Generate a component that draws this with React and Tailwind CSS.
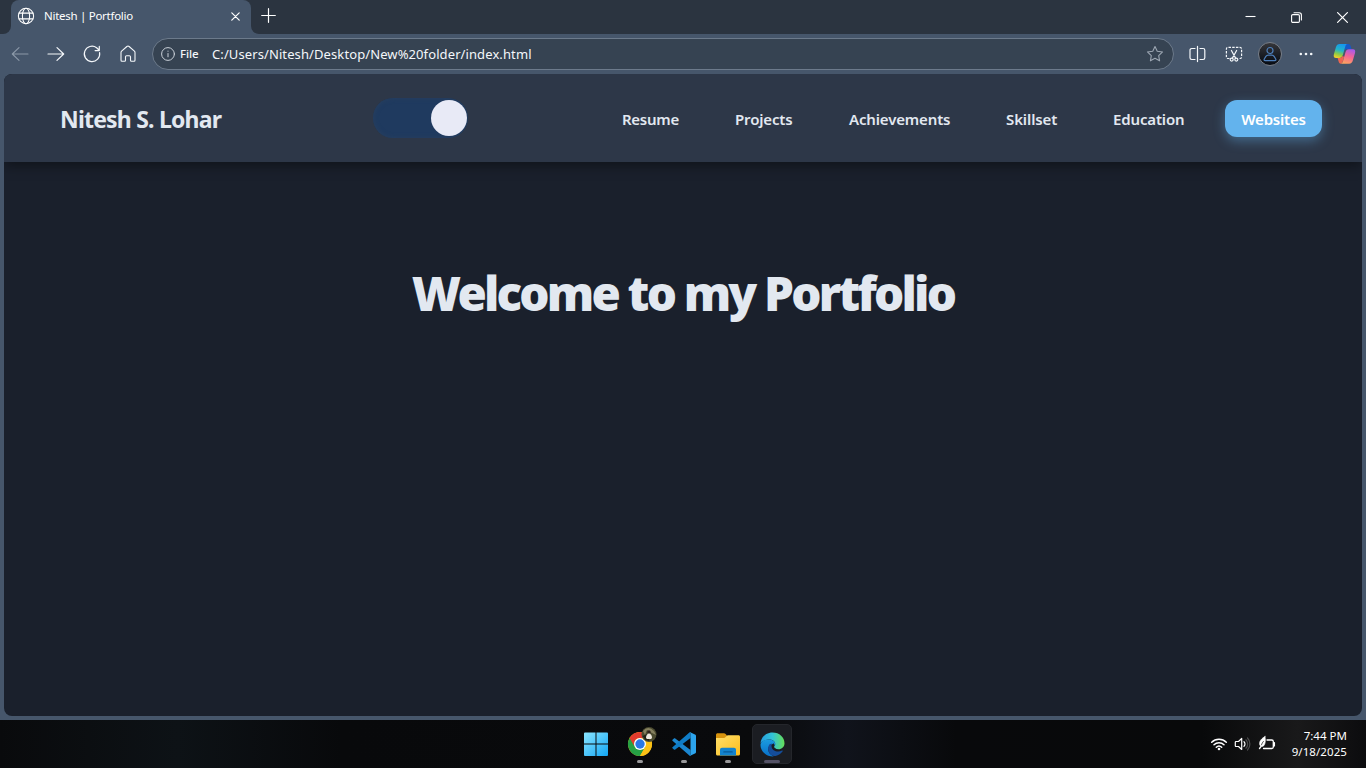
import React from "react";

const stroke = { fill: "none", stroke: "currentColor", strokeLinecap: "round", strokeLinejoin: "round" };

function Icon({ size = 20, className = "", sw = 1.1, children, box = "0 0 20 20" }) {
  return (
    <svg width={size} height={size} viewBox={box} {...stroke} strokeWidth={sw} className={`shrink-0 ${className}`}>
      {children}
    </svg>
  );
}

function TabStrip() {
  return (
    <div className="flex h-[34px] shrink-0 items-start bg-[#2b3440]">
      <div className="flex w-[11px] h-[34px] bg-[#46566b]">
        <div className="w-full rounded-br-[8px] bg-[#2b3440]" />
      </div>
      <div className="flex h-[34px] w-[240px] items-center rounded-t-[8px] bg-[#46566b] pb-[2px] text-white">
        <Icon size={18} className="ml-[6px]" sw={1.15}>
          <circle cx="10" cy="10" r="8.5" />
          <ellipse cx="10" cy="10" rx="4" ry="8.5" />
          <path d="M2.3 6.8h15.4M2.3 13.2h15.4" />
        </Icon>
        <span className="ml-[9px] w-[170px] whitespace-nowrap text-[11.5px] tracking-[-0.28px]">Nitesh | Portfolio</span>
        <Icon size={9} className="ml-[17px]" box="0 0 9 9" sw={1.2}>
          <path d="M.8.8l7.4 7.4M8.2.8L.8 8.2" />
        </Icon>
      </div>
      <div className="flex h-[34px] w-[10px] bg-[#46566b]">
        <div className="w-full rounded-bl-[8px] bg-[#2b3440]" />
      </div>
      <Icon size={15} className="mt-[8px] text-white" box="0 0 15 15" sw={1.2}>
        <path d="M7.5.7v13.6M.7 7.5h13.6" />
      </Icon>
      <div className="ml-auto flex h-[34px] items-center gap-[35px] pr-[18px] text-white">
        <Icon size={11} box="0 0 11 11" sw={1.1}><path d="M.5 4.5h10" strokeLinecap="butt" /></Icon>
        <Icon size={11} box="0 0 11 11" sw={1.1}>
          <rect x=".6" y="2.6" width="7.8" height="7.8" rx="1.2" />
          <path d="M3 .7h5.2a2.2 2.2 0 0 1 2.2 2.2V8" />
        </Icon>
        <Icon size={11} box="0 0 11 11" sw={1.2}><path d="M.6.6l9.8 9.8M10.4.6L.6 10.4" /></Icon>
      </div>
    </div>
  );
}

function CopilotLogo() {
  return (
    <svg width="23" height="22" viewBox="0 0 23 22" className="shrink-0">
      <defs>
        <linearGradient id="cpA" x1=".6" y1="0" x2=".3" y2="1">
          <stop offset="0" stopColor="#1596ee" /><stop offset=".45" stopColor="#23b5c9" />
          <stop offset=".75" stopColor="#8fcb45" /><stop offset="1" stopColor="#f1cf28" />
        </linearGradient>
        <linearGradient id="cpB" x1=".6" y1="0" x2=".3" y2="1">
          <stop offset="0" stopColor="#a95ae8" /><stop offset=".45" stopColor="#f36397" />
          <stop offset="1" stopColor="#ffa45c" />
        </linearGradient>
      </defs>
      <path d="M12 1h3.3c1.3 0 1.9.8 2.3 2l.9 3h-4.2c-1.5 0-2.2.8-2.6 2.1z" fill="#1658c8" />
      <path d="M6.7 1h7.7c-1.2.3-1.7 1.2-2.1 2.5l-2.4 8.3c-.6 2-1.6 3.1-3.6 3.1H3.1c-2.1 0-2.8-1.5-2.2-3.7L3 3.9C3.6 2 4.7 1 6.7 1z" fill="url(#cpA)" />
      <path d="M11 14l-1.2 4.2c-.4 1.4-1 2.2-2.2 2.6-1-.2-1.6-1-1.9-2l-1.1-3.9h2.1c1.5 0 2.5-.9 3.1-2.1z" fill="#ed6650" />
      <path d="M15.9 6.2h4c2.1 0 2.7 1.5 2.1 3.7l-2.1 7.3c-.6 2-1.7 3.6-3.8 3.6H7.9c1.2-.4 1.7-1.4 2.1-2.7l2.5-8.8c.6-2 1.5-3.1 3.4-3.1z" fill="url(#cpB)" />
    </svg>
  );
}

function Toolbar() {
  return (
    <div className="flex h-10 shrink-0 items-center bg-[#46566b] pl-[10px] text-[#f4f7fa]">
      <Icon className="text-[#8b98a8]"><path d="M18 10H2.3M9 3.6L2.3 10 9 16.4" /></Icon>
      <Icon className="ml-4" sw={1.2}><path d="M2 10h15.7M11 3.6l6.7 6.4-6.7 6.4" /></Icon>
      <Icon className="ml-4" sw={1.2}>
        <path d="M17.6 8.6a7.7 7.7 0 1 1-3-4.9L17 6M17.3 2.4v4.2h-4.2" />
      </Icon>
      <Icon className="ml-4" sw={1.1}>
        <path d="M3 8.6c0-.6.2-1 .6-1.4l5.3-4.7c.7-.6 1.5-.6 2.2 0l5.3 4.7c.4.4.6.8.6 1.4v7.7c0 .7-.4 1-1 1h-2.5c-.7 0-1-.4-1-1v-3.500c0-.7-.4-1.100-1.100-1.100H8.600c-.7 0-1.100.4-1.100 1.100v3.500c0 .6-.3 1-1 1H4c-.6 0-1-.3-1-1z" />
      </Icon>
      <div className="ml-[14px] flex h-8 w-[1022px] items-center rounded-full border border-[#6c7a8b] bg-[#364352] pl-2">
        <Icon size={14} box="0 0 14 14" sw={1} className="text-[#cad1d9]">
          <circle cx="7" cy="7" r="6.4" /><path d="M7 6.500v3.300M7 4.100v.2" />
        </Icon>
        <span className="ml-[5px] w-[19px] whitespace-nowrap text-[11.5px] font-medium tracking-[-0.1px]">File</span>
        <span className="ml-[13px] whitespace-nowrap pt-px text-[13px] tracking-[0.1px]">C:/Users/Nitesh/Desktop/New%20folder/index.html</span>
        <Icon size={18} className="ml-auto mr-[9px] text-[#9da7b3]" sw={1.2}>
          <path d="M10 1.6l2.5 5.3 5.9.8-4.3 4.1 1 5.8L10 14.8l-5.1 2.8 1-5.8L1.6 7.7l5.9-.8z" />
        </Icon>
      </div>
      <Icon size={18} className="ml-[14px]" box="0 0 18 18" sw={1.2}>
        <path d="M9.5 1.400v15.200M7 3.500H3.700c-1 0-1.700.7-1.700 1.700v7.600c0 1 .7 1.700 1.700 1.700H7M12 3.500h3.100c1 0 1.700.7 1.700 1.700v7.600c0 1-.7 1.700-1.700 1.700H12" />
      </Icon>
      <Icon size={18} className="ml-[19px]" box="0 0 18 18" sw={1.2}>
        <path d="M4.500 13.500H3c-.9 0-1.600-.7-1.600-1.600V4c0-.9.7-1.600 1.600-1.600h12c.9 0 1.600.7 1.600 1.600v7.900c0 .9-.7 1.600-1.600 1.600h-1.500" strokeDasharray="2.500 1.200" strokeLinecap="butt" />
        <path d="M6.400 5.500l4.200 7.600M11.600 5.500l-4.200 7.600" />
        <circle cx="6.700" cy="14.600" r="1.500" /><circle cx="11.300" cy="14.600" r="1.500" />
      </Icon>
      <div className="ml-[15px] flex h-6 w-6 items-center justify-center rounded-full border border-[#777d86] bg-linear-to-b from-[#35363b] to-[#070b13]">
        <Icon size={16} box="0 0 16 16" sw={1.2} className="text-[#4d7eb9]">
          <circle cx="8" cy="4.500" r="3" />
          <path d="M6.300 9.100h3.400c1.200 0 2 .5 2.600 1.500l1.400 2.400c.5.900.1 1.600-.9 1.600H3.200c-1 0-1.400-.7-.9-1.600l1.400-2.400c.6-1 1.400-1.500 2.600-1.500z" />
        </Icon>
      </div>
      <svg width="14" height="4" viewBox="0 0 14 4" className="ml-[17px] shrink-0 fill-current">
        <circle cx="1.8" cy="2" r="1.3" /><circle cx="7" cy="2" r="1.3" /><circle cx="12.2" cy="2" r="1.3" />
      </svg>
      <div className="ml-5"><CopilotLogo /></div>
    </div>
  );
}

const links = [
  { label: "Resume", style: "w-[57px] mr-14 tracking-[-0.28px]" },
  { label: "Projects", style: "w-[58px] mr-14 tracking-[-0.15px]" },
  { label: "Achievements", style: "w-[102px] mr-[55px] tracking-[-0.15px]" },
  { label: "Skillset", style: "w-[52px] mr-[55px] tracking-[-0.1px]" },
  { label: "Education", style: "w-[72px] mr-10 tracking-[-0.15px]" },
];

function SiteHeader() {
  return (
    <header className="flex h-[88px] shrink-0 items-center bg-[#2d3748] pl-[56px] shadow-[0_4px_12px_rgba(0,0,0,0.4)]">
      <div className="w-[313px] whitespace-nowrap pt-[2px] text-[23px] font-bold tracking-[-0.8px] text-[#e2e8f0]">Nitesh S. Lohar</div>
      <div className="flex h-10 w-[95px] items-center justify-end rounded-full bg-[#1f3a5f] pr-px shadow-[inset_0_0_5px_#29405f]">
        <div className="h-9 w-9 rounded-full bg-[#e8eaf6]" />
      </div>
      <nav className="ml-[154px] flex items-center text-[15px] font-semibold text-[#e2e8f0]">
        {links.map((l) => (
          <a key={l.label} className={`whitespace-nowrap pt-[2px] ${l.style}`}>{l.label}</a>
        ))}
        <a className="flex h-[37px] w-[97px] items-center justify-center rounded-[12px] bg-[#63b3ed] pt-[3px] tracking-[-0.2px] text-white shadow-[0_4px_12px_rgba(99,179,237,0.4)]">
          Websites
        </a>
      </nav>
    </header>
  );
}

function ChromeLogo() {
  return (
    <svg width="30" height="32" viewBox="0 0 30 32" className="shrink-0">
      <circle cx="13" cy="18" r="12" fill="#fbc116" />
      <path d="M13 18L2.6 12A12 12 0 0 0 13 30l5.2-9z" fill="#25a144" />
      <path d="M18.2 21L13 30A12 12 0 0 0 23.4 12H13z" fill="#fbc116" />
      <path d="M2.6 12L7.8 21a6 6 0 0 1 5.2-9h10.4A12 12 0 0 0 2.6 12z" fill="#e33b2e" />
      <circle cx="13" cy="18" r="6" fill="#fff" /><circle cx="13" cy="18" r="4.7" fill="#2878e7" />
      <circle cx="22" cy="8.500" r="7.500" fill="#4b4b30" />
      <path d="M16 5q5-6 11 0l2 4-4-2-5-3-2 5z" fill="#85805f" />
      <path d="M15.500 10l5-2 2 7-4-1z" fill="#202216" />
      <circle cx="22" cy="6" r="1.700" fill="#2d211b" />
      <path d="M19 12c0-6 6-6 6 0l-1 1h-4z" fill="#eee9df" />
    </svg>
  );
}

function VSCodeLogo() {
  return (
    <svg width="24" height="24" viewBox="0 0 24 24" className="shrink-0">
      <path d="M.5 7.8l1.4-1.3c.4-.4.9-.4 1.4 0L18.500 18v5.800c-.6 0-1-.2-1.400-.6L.5 8.800c-.4-.3-.4-.7 0-1z" fill="#1b86cf" />
      <path d="M.5 16.2l1.4 1.3c.4.4.9.4 1.4 0L18.500 6V.2c-.6 0-1 .2-1.400.6L.5 15.200c-.4.3-.4.7 0 1z" fill="#0f7cc6" />
      <path d="M17 .8c.5-.5 1-.6 1.700-.3L23 2.600c.7.3 1 .8 1 1.500v15.800c0 .7-.3 1.200-1 1.500l-4.300 2.100c-.7.3-1.200.2-1.700-.3.8.6 1.500.2 1.500-.7v-21C18.500.6 17.800.2 17 .8z" fill="#2ca4ed" />
    </svg>
  );
}

function FolderLogo() {
  return (
    <svg width="24" height="23" viewBox="0 0 24 23" className="shrink-0">
      <defs><linearGradient id="fld" x1="0" y1="0" x2="1" y2="1"><stop offset="0" stopColor="#ffe06c" /><stop offset="1" stopColor="#fcbc1a" /></linearGradient></defs>
      <path d="M0 2C0 .8.700.2 1.700.2h6.200c.7 0 1.200.2 1.700.8l1.300 1.500v5H0z" fill="#d7930d" />
      <path d="M0 5h7.500c1 0 1.500-.3 2.100-1l1-1.100c.4-.4.8-.6 1.400-.6h10.500c.9 0 1.500.6 1.500 1.500v17.300c0 .9-.6 1.500-1.500 1.500h-21C.6 22.600 0 22 0 21.100z" fill="url(#fld)" />
      <path d="M4 22.600v-5.800c0-1.200.8-2 2-2h12c1.200 0 2 .8 2 2v5.800z" fill="#1283ce" />
      <path d="M8 18.200h8c.5 0 .8.300.8.700s-.3.700-.8.700H8c-.5 0-.8-.3-.8-.7s.3-.7.8-.7z" fill="#075b99" />
    </svg>
  );
}

function EdgeLogo() {
  return (
    <svg width="25" height="25" viewBox="0 0 25 25" className="shrink-0">
      <defs>
        <linearGradient id="edTop" x1="0" y1=".5" x2="1" y2=".5"><stop offset="0" stopColor="#259ce0" /><stop offset=".5" stopColor="#32c3d6" /><stop offset="1" stopColor="#65df57" /></linearGradient>
        <linearGradient id="edSide" x1="0" y1="0" x2="0" y2="1"><stop offset="0" stopColor="#1b9be0" /><stop offset="1" stopColor="#0870c8" /></linearGradient>
      </defs>
      <path d="M.5 11.500C.9 5.100 6 .5 12.500.5c7 0 12 4.800 12 10.700 0 3.500-2.700 6-6 6-2.800 0-4.500-1-4.500-2.100 0-.8 1.200-1 1.200-3.100 0-2.500-2.700-4.500-6.200-4.500-4 0-7.200 2-8.500 4z" fill="url(#edTop)" />
      <path d="M.5 12.500C1.200 9 4.500 7.500 8.500 7.500c4 0 6.700 2.100 6.700 4.500 0 .7-.2 1.400-.5 1.900-1-1.700-5-1.700-6.200 1.600-1.200 3.600 1.700 7.800 5.700 8.800C6.500 25.300.1 19.300.5 12.500z" fill="url(#edSide)" />
      <path d="M9.300 12.500c-3.500 5.500 1.400 12.500 6.200 11.500 3-.7 5.700-2.500 7.200-4.800.3-.5-.1-.8-.6-.6-4.500 2-10 .5-10.500-4.200-.1-.8.1-1.600.6-2.400-1-.4-2.200-.2-2.900.5z" fill="#144d9b" />
      <path d="M11.700 13c.4-1 1.200-1.600 2.100-1.600.8.8.8 1.900.3 2.600-.5.900.1 2 2.200 2.800-2 .5-4.800-1.100-4.600-3.800z" fill="#1b1d22" />
    </svg>
  );
}

function TaskButton({ children, active }) {
  return (
    <div className={`flex h-10 w-10 flex-col items-center justify-between rounded-[5px] ${active ? "border border-[#24262b] bg-[#1b1d22]" : ""}`}>
      {children}
    </div>
  );
}

function Taskbar() {
  return (
    <footer className="flex h-12 shrink-0 items-center bg-[linear-gradient(90deg,#090a0c_0%,#0d1216_13%,#08090b_25%,#090a0c_56%,#10131b_62%,#08090b_70%,#08090a_88%,#19191a_95%,#0c0c0e_100%)]">
      <div className="ml-[576px] flex w-[216px] gap-1">
        <TaskButton>
          <svg width="24" height="24" viewBox="0 0 24 24" className="mt-[8px] mr-px">
            <defs><linearGradient id="win" x1="0" y1="0" x2="1" y2="1"><stop offset="0" stopColor="#8be5ff" /><stop offset="1" stopColor="#12a6f4" /></linearGradient></defs>
            <path fill="url(#win)" d="M1 .5h10.500V11.500H0V1.500Q0 .5 1 .5zM12.500.5H23Q24 .5 24 1.500V11.500H12.500zM0 12.500H11.500V24H1Q0 24 0 23zM12.500 12.500H24V23Q24 24 23 24H12.500z" />
          </svg>
        </TaskButton>
        <TaskButton><div className="mt-[2px] pl-1"><ChromeLogo /></div><i className="mb-[1px] h-[3px] w-[6px] rounded-full bg-[#99999b]" /></TaskButton>
        <TaskButton><div className="mt-2"><VSCodeLogo /></div><i className="mb-[1px] h-[3px] w-[6px] rounded-full bg-[#99999b]" /></TaskButton>
        <TaskButton><div className="mt-[9px]"><FolderLogo /></div><i className="mb-[1px] h-[3px] w-[6px] rounded-full bg-[#99999b]" /></TaskButton>
        <TaskButton active><div className="mt-[7px]"><EdgeLogo /></div><i className="h-[3px] w-[16px] rounded-full bg-[#545266]" /></TaskButton>
      </div>
      <div className="ml-[418px] flex w-[137px] items-center text-white">
        <Icon size={18} box="0 0 18 18" sw={1.5}>
          <path d="M1.700 7.200a10.300 10.300 0 0 1 14.600 0M4 9.800a7.100 7.100 0 0 1 10 0M6.300 12.300a3.900 3.900 0 0 1 5.400 0" />
          <circle cx="9" cy="14" r="1.300" fill="currentColor" stroke="none" />
        </Icon>
        <Icon size={18} box="0 0 18 18" className="ml-[6px]" sw={1.2}>
          <path d="M2 6.500h2.500L7.700 3.500v11L4.500 11.500H2c-.4 0-.7-.3-.7-.7V7.200c0-.4.300-.7.700-.7zM10 6.700c1.300 1.200 1.300 3.400 0 4.600" />
          <path d="M11.900 4.800c2.400 2.300 2.400 6.100 0 8.400M13.500 3c3.200 3.300 3.200 8.700 0 12" stroke="#4c4c4c" />
        </Icon>
        <Icon size={18} box="0 0 18 18" className="ml-[6px]" sw={1.3}>
          <path d="M9 5h4.800c.9 0 1.500.6 1.500 1.500v5.500c0 .9-.6 1.500-1.500 1.500H5.500M16.400 7.600v3.300" />
          <path d="M7 1.500C3.500 3.500 1.300 6 1.600 9c.1 1.400 1 2.500 2.400 2.500C6.800 11.500 8 7 7 1.500z" fill="currentColor" stroke="currentColor" strokeWidth=".6" />
          <path d="M3.500 9.800c.4-1.300 1-2.400 1.900-3.400" strokeWidth=".7" stroke="#161616" /><path d="M1.500 13.500l1.500-2" />
        </Icon>
        <div className="ml-auto w-[57px] whitespace-nowrap text-right text-[11.5px] leading-4"><div className="tracking-[0.02px]">7:44 PM</div><div className="tracking-[0.08px]">9/18/2025</div></div>
      </div>
    </footer>
  );
}

export default function App() {
  return (
    <div className="flex h-[768px] w-[1366px] flex-col overflow-hidden bg-[#46566b] font-['Noto_Sans','Open_Sans',sans-serif]">
      <TabStrip />
      <Toolbar />
      <main className="mx-1 mb-1 flex flex-1 flex-col overflow-hidden rounded-[8px] bg-[#1a202c]">
        <SiteHeader />
        <section className="flex justify-center pt-[98px]">
          <h1 className="whitespace-nowrap text-[47.5px] leading-[66px] font-black tracking-[-2.8px] text-[#e2e8f0]">Welcome to my Portfolio</h1>
        </section>
      </main>
      <Taskbar />
    </div>
  );
}
